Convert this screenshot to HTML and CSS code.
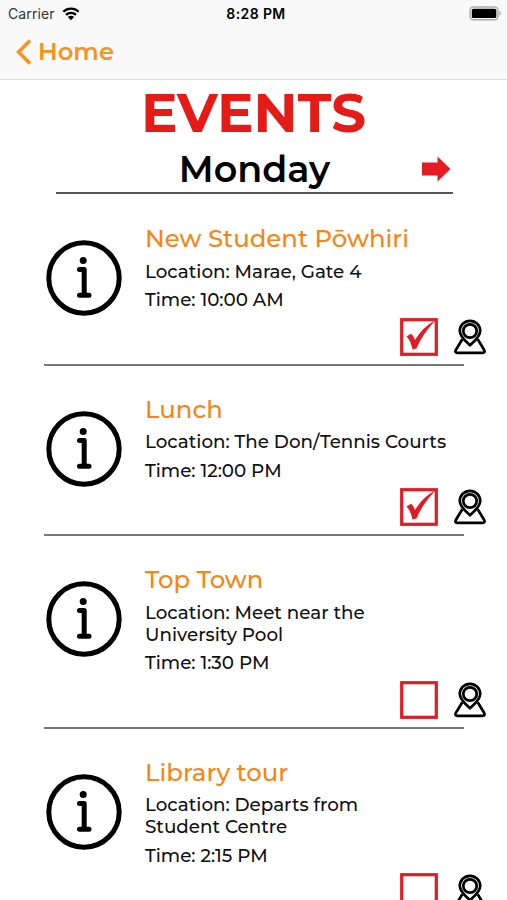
FILE: index.html
```html
<!DOCTYPE html>
<html lang="en">
<head>
    <meta charset="UTF-8">
    <meta name="viewport" content="width=device-width, initial-scale=1.0">
    <title>Events</title>
    <link rel="stylesheet" href="styles.css">
</head>
<body>
    <svg class="symbols" width="0" height="0">
        <symbol id="info" viewBox="0 0 76 76">
            <circle cx="38" cy="38" r="35.2" fill="none" stroke="#000" stroke-width="5"/>
            <circle cx="37.2" cy="20.5" r="3.5"/>
            <path d="M33.5 29.5h4.700v25.700M33.5 55.2h9.5" fill="none" stroke="#000" stroke-width="5" stroke-linecap="round" stroke-linejoin="round"/>
        </symbol>
        <symbol id="box" viewBox="0 0 38 38">
            <rect x="1.7" y="1.7" width="34.6" height="34.6" fill="none" stroke="#dc1f26" stroke-width="3.2"/>
        </symbol>
        <symbol id="tick" viewBox="0 0 38 38">
            <path d="M6.5 18.5l4.5-2.7c2 1.6 3.2 3.7 4 6.2C20.5 13.5 26 7 35.5 2.5 27 11.5 21 20 16.5 30.5l-4 1C11.5 26.5 9.5 21.5 6.5 18.5z" fill="#dc1f26"/>
        </symbol>
        <symbol id="pin" viewBox="0 0 32 36">
            <g fill="none" stroke="#000" stroke-width="2.7" stroke-linejoin="round">
                <path d="M8.3 20.3L1.8 31c-.8 1.7-.2 2.8 1.5 2.8h25.4c1.7 0 2.3-1.100 1.5-2.8L23.7 20.3"/>
                <path d="M16 26.3c-3-3-10.200-8.300-10.200-14.300a10.200 10.200 0 0 1 20.400 0c0 6-7.200 11.300-10.200 14.300z"/>
                <circle cx="16" cy="12" r="6.7"/>
            </g>
        </symbol>
    </svg>

    <header class="navbar">
        <div class="status">
            <div class="carrier">
                <span>Carrier</span>
                <svg width="18" height="14" viewBox="0 0 18 14">
                    <path d="M1.3 4.7a11 11 0 0 1 15.4 0M4 7.8a7.200 7.200 0 0 1 10 0" fill="none" stroke="#000" stroke-width="2.3"/>
                    <path d="M5.9 10a4.400 4.400 0 0 1 6.200 0L9 13.2z"/>
                </svg>
            </div>
            <div class="clock">8:28 PM</div>
            <svg class="battery" width="33" height="15" viewBox="0 0 33 15">
                <rect x="1" y="1" width="28" height="12.8" rx="3.5" fill="#fafafa" stroke="#aaa" stroke-width="1.4"/>
                <rect x="2.8" y="2.8" width="24.5" height="9.2" rx="1.5"/>
                <path d="M30.5 5.3c1.8.6 1.8 3.6 0 4.200z" fill="#999"/>
            </svg>
        </div>
        <a class="back" href="#">
            <svg width="16" height="26" viewBox="0 0 16 26">
                <path d="M14 1.5L2.5 13 14 24.5" fill="none" stroke="#f7931e" stroke-width="3.6"/>
            </svg>
            <span>Home</span>
        </a>
    </header>

    <main>
        <h1>EVENTS</h1>
        <div class="day">
            <h2>Monday</h2>
            <svg class="next" width="29" height="26" viewBox="0 0 29 26">
                <path d="M0 6.5h15.5V.5L28.5 13 15.5 25.5v-6H0z" fill="#e51b23"/>
            </svg>
        </div>

        <section class="event">
            <svg class="info"><use href="#info"/></svg>
            <div class="details">
                <h3>New Student Pōwhiri</h3>
                <p>Location: Marae, Gate 4</p>
                <p>Time: 10:00 AM</p>
                <div class="actions">
                    <svg class="check"><use href="#box"/><use href="#tick"/></svg>
                    <svg class="pin"><use href="#pin"/></svg>
                </div>
            </div>
        </section>

        <section class="event">
            <svg class="info"><use href="#info"/></svg>
            <div class="details">
                <h3>Lunch</h3>
                <p>Location: The Don/Tennis Courts</p>
                <p>Time: 12:00 PM</p>
                <div class="actions">
                    <svg class="check"><use href="#box"/><use href="#tick"/></svg>
                    <svg class="pin"><use href="#pin"/></svg>
                </div>
            </div>
        </section>

        <section class="event">
            <svg class="info"><use href="#info"/></svg>
            <div class="details">
                <h3>Top Town</h3>
                <p>Location: Meet near the<br>University Pool</p>
                <p>Time: 1:30 PM</p>
                <div class="actions">
                    <svg class="check"><use href="#box"/></svg>
                    <svg class="pin"><use href="#pin"/></svg>
                </div>
            </div>
        </section>

        <section class="event">
            <svg class="info"><use href="#info"/></svg>
            <div class="details">
                <h3>Library tour</h3>
                <p>Location: Departs from<br>Student Centre</p>
                <p>Time: 2:15 PM</p>
                <div class="actions">
                    <svg class="check"><use href="#box"/></svg>
                    <svg class="pin"><use href="#pin"/></svg>
                </div>
            </div>
        </section>
    </main>
</body>
</html>
```
FILE: styles.css
```css
* {
    box-sizing: border-box;
    margin: 0;
    padding: 0;
}
body {
    height: 900px;
    overflow: hidden;
    background: #fff;
    color: #111;
    font-family: Montserrat, Inter, sans-serif;
}
svg {
    display: block;
    flex: none;
}
.symbols {
    position: absolute;
}
.navbar {
    height: 80px;
    background: #f9f9f9;
    border-bottom: 1px solid #dcdcdc;
}
.status {
    display: grid;
    grid-template-columns: 1fr auto 1fr;
    align-items: center;
    height: 27px;
    padding: 0 5px 0 8px;
    font-family: Inter, sans-serif;
    font-size: 14px;
}
.carrier {
    display: flex;
    align-items: center;
    gap: 7px;
    color: #333;
    letter-spacing: 0.1px;
}
.clock {
    padding-left: 2px;
    color: #000;
    font-weight: 600;
    letter-spacing: 0.4px;
}
.battery {
    justify-self: end;
}
.back {
    display: flex;
    align-items: center;
    gap: 6px;
    height: 50px;
    padding-left: 16px;
    color: #f7931e;
    font-size: 24.3px;
    font-weight: 600;
    text-decoration: none;
}
.back span {
    margin-top: -2px;
}
h1 {
    height: 66px;
    color: #e51b17;
    font-size: 54.6px;
    font-weight: 700;
    line-height: 66px;
    text-align: center;
}
.day {
    display: grid;
    grid-template-columns: 1fr auto 1fr;
    align-items: center;
    width: 397px;
    height: 48px;
    margin: 0 0 1px 56px;
    border-bottom: 2px solid #555;
}
.day h2 {
    grid-column: 2;
    color: #000;
    font-size: 36.5px;
    font-weight: 600;
    line-height: 44px;
}
.next {
    justify-self: end;
    margin-right: 2px;
}
.event {
    display: flex;
    gap: 23px;
    width: 420px;
    margin-left: 44px;
    padding: 29px 0 8.17px 2px;
    border-bottom: 2px solid #777;
}
.info {
    width: 76px;
    height: 76px;
    margin-top: 16px;
}
.details {
    flex: 1;
}
h3 {
    margin-bottom: 7.5px;
    color: #f98412;
    font-size: 24.4px;
    font-weight: 500;
    line-height: 29px;
}
p {
    margin-bottom: 6.5px;
    font-size: 18.3px;
    font-weight: 500;
    line-height: 22px;
    white-space: nowrap;
}
.actions {
    display: flex;
    justify-content: flex-end;
    gap: 16px;
    margin-right: -22px;
}
.check {
    width: 38px;
    height: 38px;
}
.pin {
    width: 32px;
    height: 36px;
    margin-top: 1px;
}
```
